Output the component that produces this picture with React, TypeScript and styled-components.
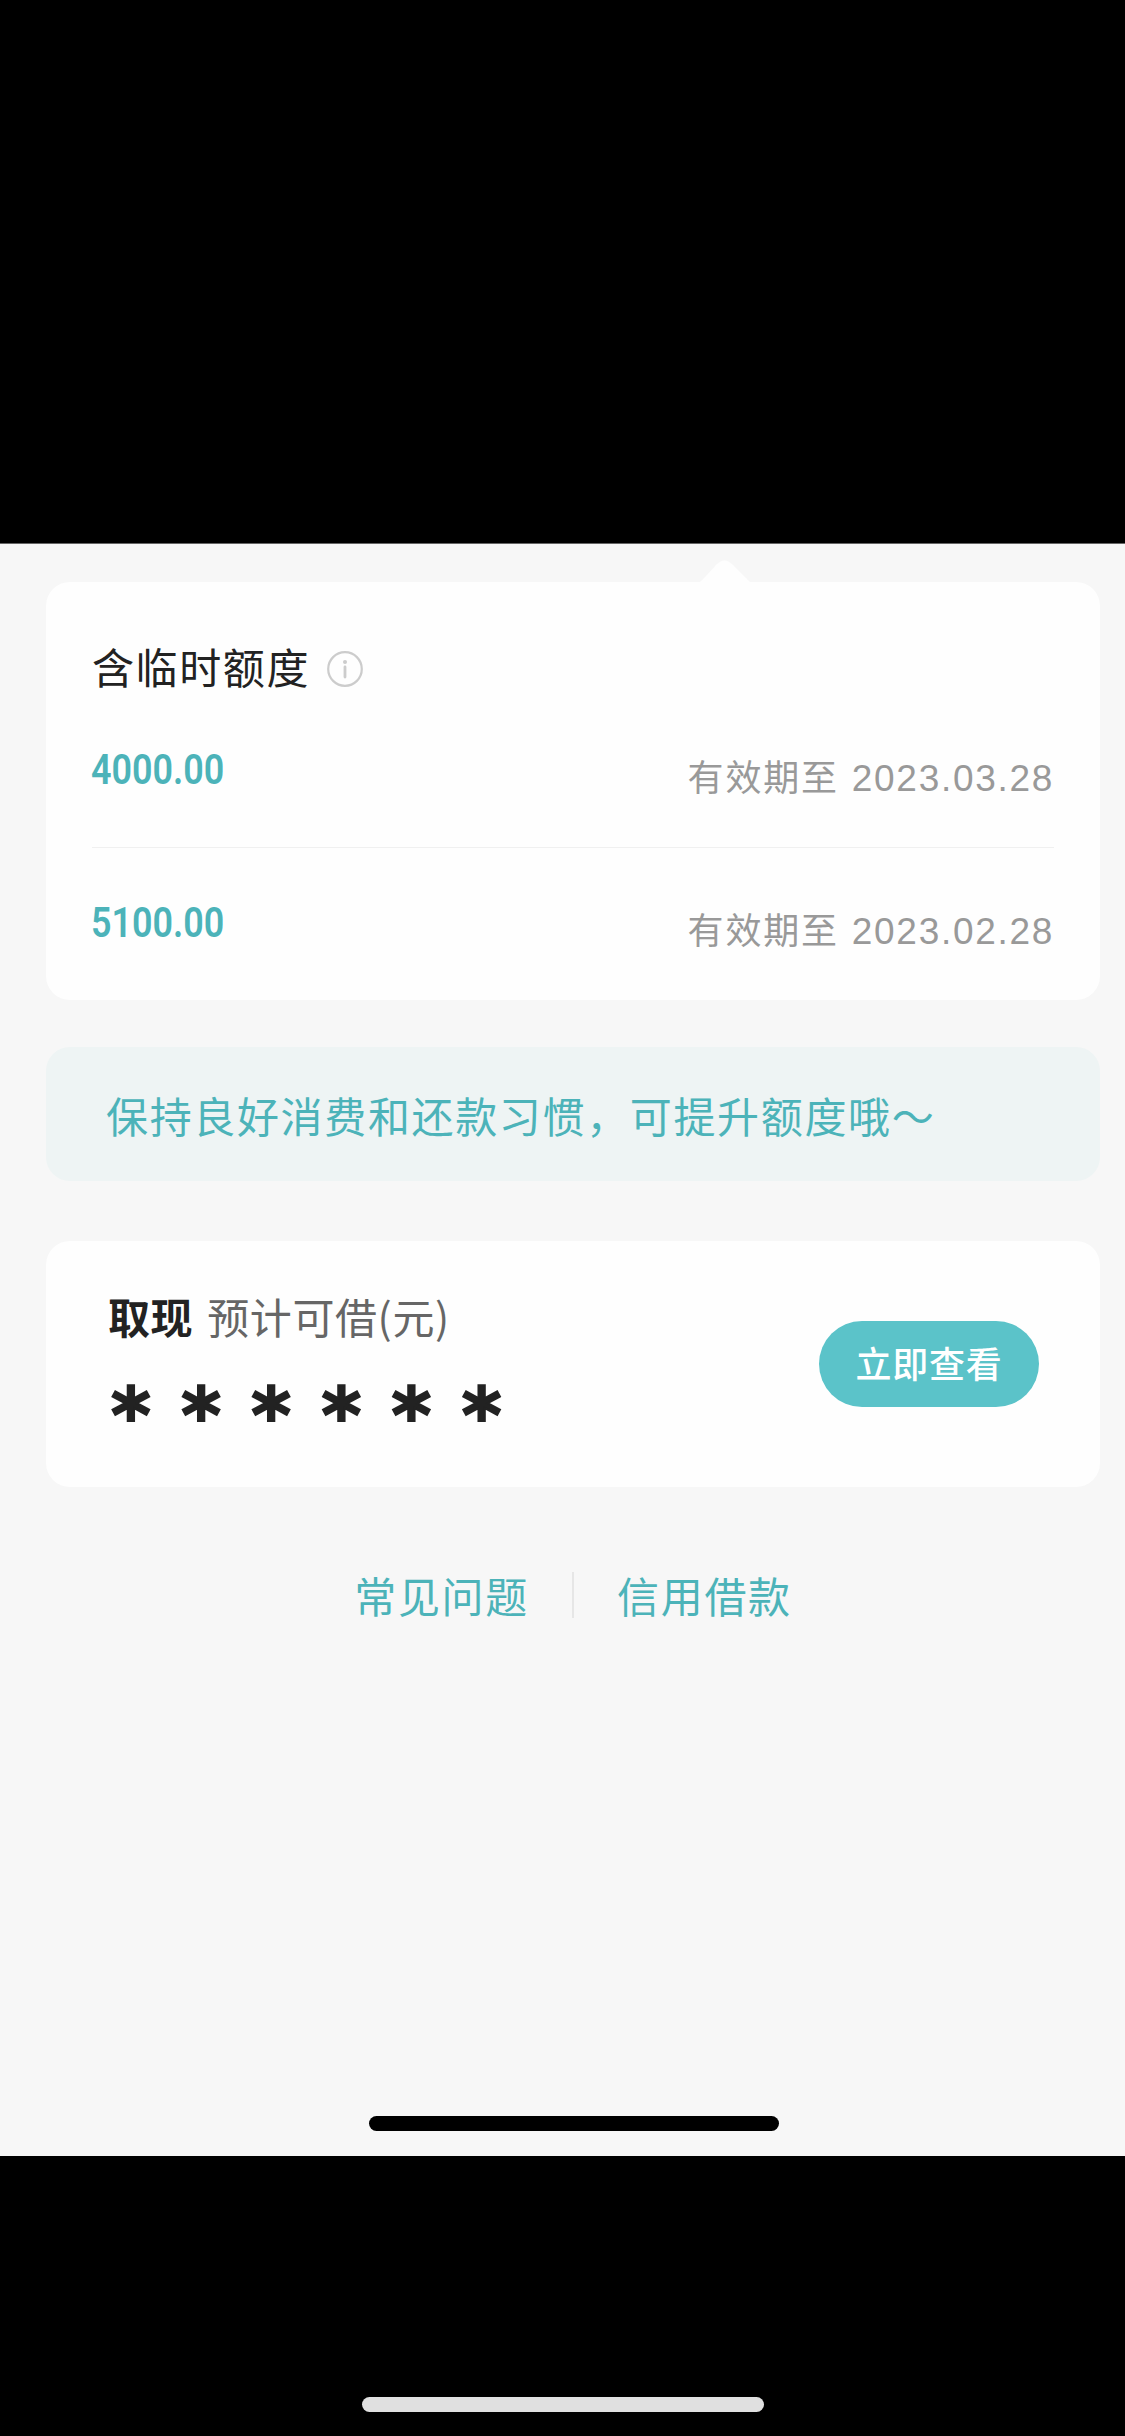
import React from "react";
import styled, { createGlobalStyle } from "styled-components";

const teal = "#4cb3b9";

const GlobalStyle = createGlobalStyle`
  * { box-sizing: border-box; }
  body {
    margin: 0;
    background: #000;
    font-family: "Noto Sans CJK SC", "Liberation Sans", sans-serif;
  }
`;

const Screen = styled.div`
  display: flex;
  flex-direction: column;
  width: 1125px;
  height: 2436px;
  padding-top: 543px;
  background: #000;
`;

const Page = styled.main`
  display: flex;
  flex-direction: column;
  height: 1613px;
  padding: 38px 25px 25px 46px;
  background: #f7f7f7;
  border-top: 1px solid #666;
`;

const Card = styled.section`
  position: relative;
  flex: none;
  background: #fefefe;
  border-radius: 24px;
`;

const QuotaCard = styled(Card)`
  height: 418px;
  padding: 54px 46px 0;
`;

const Pointer = styled.svg`
  position: absolute;
  left: 649px;
  top: -22px;
  width: 60px;
  height: 23px;
`;

const QuotaTitle = styled.h2`
  display: flex;
  align-items: center;
  gap: 17px;
  height: 60px;
  margin: 0 0 -1px;
  font-size: 42px;
  font-weight: 400;
  line-height: 60px;
  letter-spacing: 1.6px;
  color: #222;
`;

const InfoIcon = styled.svg`
  width: 36px;
  height: 36px;
  margin-top: 6px;
`;

const QuotaRow = styled.div<{ $divided?: boolean }>`
  display: flex;
  justify-content: space-between;
  align-items: center;
  height: ${(p) => (p.$divided ? 153 : 152)}px;
  border-bottom: ${(p) => (p.$divided ? "1px solid #f0f0f0" : "none")};
`;

const Amount = styled.span`
  padding-bottom: 4px;
  font-family: Roboto, sans-serif;
  font-size: 43px;
  font-weight: 600;
  line-height: 50px;
  color: ${teal};
  transform: translateX(-1px) scaleX(0.835);
  transform-origin: left center;
`;

const Expiry = styled.span`
  padding-top: 11px;
  font-size: 36px;
  line-height: 52px;
  letter-spacing: 1.8px;
  color: #999;
`;

const ExpiryDate = styled.span`
  margin-left: 13px;
  font-family: "Liberation Sans", sans-serif;
  font-size: 37px;
  letter-spacing: 1.7px;
`;

const Tip = styled.p`
  flex: none;
  height: 134px;
  margin: 47px 0 0;
  padding: 38px 60px 0;
  border-radius: 24px;
  background: #eef4f4;
  font-size: 42px;
  line-height: 60px;
  letter-spacing: 1.65px;
  color: ${teal};
`;

const CashCard = styled(Card)`
  display: flex;
  justify-content: space-between;
  align-items: center;
  height: 246px;
  margin-top: 60px;
  padding: 0 61px 0 62px;
`;

const CashInfo = styled.div`
  display: flex;
  flex-direction: column;
  height: 100%;
  padding-top: 45px;
`;

const CashLabel = styled.div`
  display: flex;
  gap: 14px;
  font-size: 42px;
  line-height: 60px;
  letter-spacing: 0.6px;
  color: #666;
`;

const CashName = styled.strong`
  font-weight: 700;
  color: #222;
`;

const Mask = styled.div`
  margin-top: 25px;
  padding-left: 3px;
  height: 64px;
  font-family: "DejaVu Sans", sans-serif;
  font-size: 76px;
  font-weight: 700;
  line-height: 90px;
  letter-spacing: 30.4px;
  color: #222;
  -webkit-text-stroke: 2px #222;
`;

const ViewButton = styled.button`
  width: 220px;
  height: 86px;
  padding: 0 0 4px;
  border: 0;
  border-radius: 43px;
  background: #5bc3c9;
  font-family: inherit;
  font-size: 36px;
  font-weight: 500;
  letter-spacing: 0.8px;
  color: #fff;
`;

const Links = styled.nav`
  display: flex;
  justify-content: center;
  align-items: center;
  gap: 43px;
  height: 60px;
  margin-top: 78px;
`;

const Link = styled.a`
  padding-bottom: 1px;
  font-size: 42px;
  line-height: 60px;
  letter-spacing: 1.7px;
  color: ${teal};
`;

const LinkDivider = styled.span`
  width: 2px;
  height: 46px;
  background: #e6e6e6;
`;

const HomeBar = styled.div<{ $width: number; $color: string }>`
  width: ${(p) => p.$width}px;
  height: 15px;
  border-radius: 8px;
  background: ${(p) => p.$color};
`;

const PageFooter = styled.footer`
  display: flex;
  justify-content: center;
  margin-top: auto;
  padding-left: 1px;
`;

const DeviceFooter = styled.footer`
  display: flex;
  justify-content: center;
  margin-top: auto;
  padding-bottom: 24px;
`;

const quotas = [
  { amount: "4000.00", date: "2023.03.28" },
  { amount: "5100.00", date: "2023.02.28" },
];

export default function App() {
  return (
    <>
      <GlobalStyle />
      <Screen>
        <Page>
          <QuotaCard>
            <Pointer viewBox="0 0 60 23">
              <path d="M2 23 C6 22 7 20 10 17 L21 5 Q29.500 -4 38 5 L50 17 C53 20 54 22 58 23Z" fill="#fefefe" />
            </Pointer>
            <QuotaTitle>
              含临时额度
              <InfoIcon viewBox="0 0 36 36" fill="none">
                <circle cx="18" cy="18" r="16.800" stroke="#ccc" strokeWidth="2.200" />
                <circle cx="18" cy="11" r="2" fill="#ccc" />
                <path d="M18 16V26" stroke="#ccc" strokeWidth="2.800" strokeLinecap="round" />
              </InfoIcon>
            </QuotaTitle>
            {quotas.map((q, i) => (
              <QuotaRow key={q.date} $divided={i === 0}>
                <Amount>{q.amount}</Amount>
                <Expiry>
                  有效期至<ExpiryDate>{q.date}</ExpiryDate>
                </Expiry>
              </QuotaRow>
            ))}
          </QuotaCard>
          <Tip>保持良好消费和还款习惯，可提升额度哦～</Tip>
          <CashCard>
            <CashInfo>
              <CashLabel>
                <CashName>取现</CashName>
                <span>预计可借(元)</span>
              </CashLabel>
              <Mask>******</Mask>
            </CashInfo>
            <ViewButton>立即查看</ViewButton>
          </CashCard>
          <Links>
            <Link>常见问题</Link>
            <LinkDivider />
            <Link>信用借款</Link>
          </Links>
          <PageFooter>
            <HomeBar $width={410} $color="#000" />
          </PageFooter>
        </Page>
        <DeviceFooter>
          <HomeBar $width={402} $color="#e0e0e0" />
        </DeviceFooter>
      </Screen>
    </>
  );
}
